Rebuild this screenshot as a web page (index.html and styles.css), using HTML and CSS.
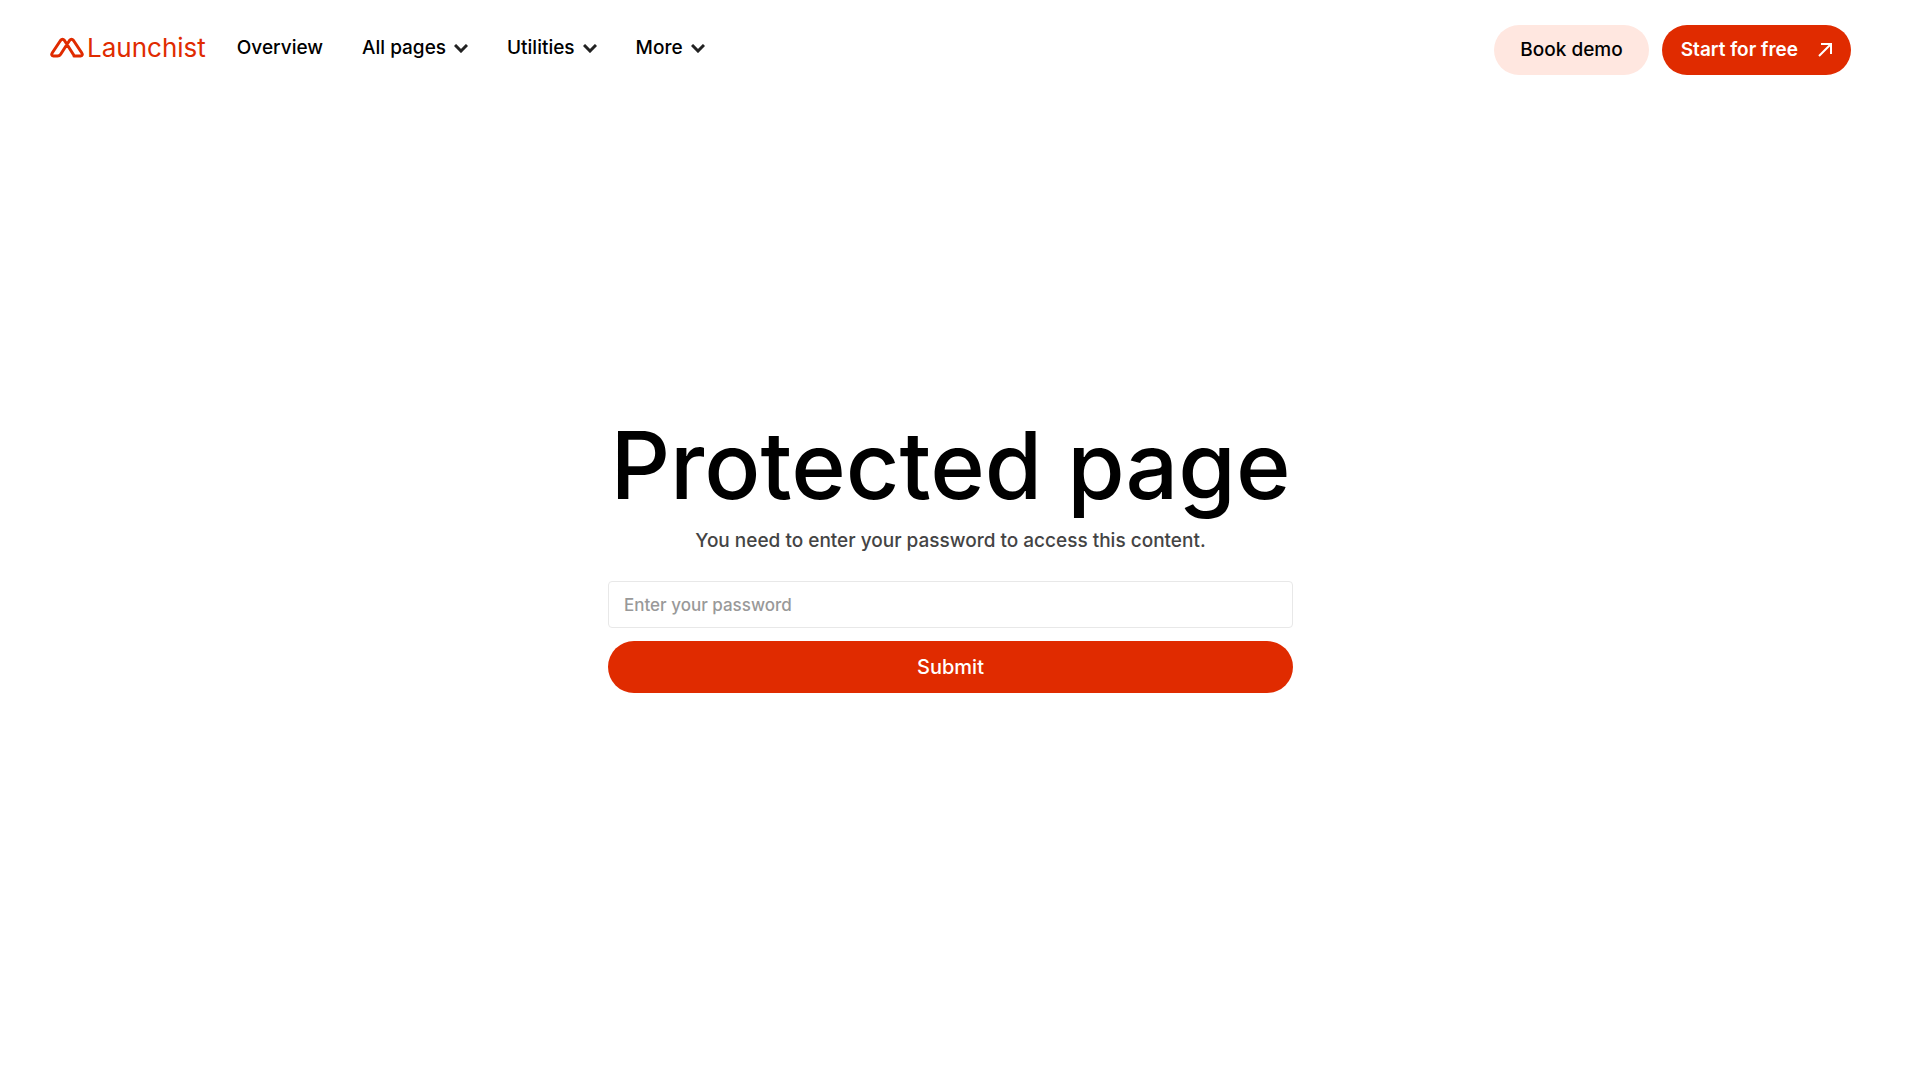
FILE: index.html
```html
<!DOCTYPE html>
<html lang="en">
<head>
<meta charset="utf-8">
<meta name="viewport" content="width=device-width, initial-scale=1">
<title>Protected page – Launchist</title>
<link rel="stylesheet" href="styles.css">
</head>
<body>
<header class="header">
  <a class="brand" href="#">
    <svg class="brand-mark" viewBox="0 0 34 22" aria-hidden="true"><path d="M24 19H30.500Q33.500 18.500 31.500 15.500L23.500 3.500Q21.500 1 19.500 3.500L10.500 17.500Q9.500 19 7.500 19H3.500Q.5 18.500 2.500 15.500L10.500 3.500Q12.500 1 14.500 3.500L24 18.500"/></svg>
    <span>Launchist</span>
  </a>
  <nav class="nav">
    <a class="nav-link" href="#">Overview</a>
    <button class="nav-link" type="button">All pages <svg class="chevron" viewBox="0 0 14 9" aria-hidden="true"><path d="M1 1l6 6 6-6"/></svg></button>
    <button class="nav-link" type="button">Utilities <svg class="chevron" viewBox="0 0 14 9" aria-hidden="true"><path d="M1 1l6 6 6-6"/></svg></button>
    <button class="nav-link" type="button">More <svg class="chevron" viewBox="0 0 14 9" aria-hidden="true"><path d="M1 1l6 6 6-6"/></svg></button>
  </nav>
  <div class="actions">
    <a class="pill pill-soft" href="#">Book demo</a>
    <a class="pill pill-solid" href="#">Start for free <svg class="arrow" viewBox="0 0 14 14" aria-hidden="true"><path d="M1 13L13 1M3 1h10v10"/></svg></a>
  </div>
</header>
<main class="main">
  <form class="gate">
    <h1 class="title">Protected page</h1>
    <label class="lead" for="password">You need to enter your password to access this content.</label>
    <input class="field" id="password" type="password" placeholder="Enter your password">
    <button class="submit" type="submit">Submit</button>
  </form>
</main>
</body>
</html>
```
FILE: styles.css
```css
* { box-sizing: border-box; }

body {
  margin: 0;
  padding-right: 19px;
  min-height: 100vh;
  display: flex;
  flex-direction: column;
  background: #fff;
  color: #000;
  font: 500 19px/24px Inter, "Liberation Sans", sans-serif;
}

a { color: inherit; text-decoration: none; }

button { font: inherit; border: 0; cursor: pointer; }

.header {
  display: flex;
  align-items: flex-start;
  padding: 25px 50px;
}

.brand {
  display: flex;
  align-items: center;
  gap: 3px;
  height: 46px;
  margin-right: 31px;
  color: #e02b00;
  font-size: 26px;
  font-weight: 400;
}

.brand-mark { width: 34px; height: 22px; }

.brand-mark path {
  fill: none;
  stroke: currentColor;
  stroke-width: 3;
  stroke-linecap: round;
  stroke-linejoin: round;
}

.nav { display: flex; gap: 39px; }

.nav-link {
  display: flex;
  align-items: center;
  gap: 8px;
  height: 46px;
  padding: 0;
  background: none;
  color: inherit;
}

.chevron { width: 14px; height: 9px; }

.chevron path {
  fill: none;
  stroke: #222;
  stroke-width: 3;
}

.actions {
  display: flex;
  gap: 13px;
  margin-left: auto;
}

.pill {
  display: flex;
  align-items: center;
  height: 50px;
  padding: 0 26px;
  border-radius: 25px;
}

.pill-soft { background: #ffe7e0; }

.pill-solid {
  gap: 20px;
  padding: 0 19px;
  background: #e02b00;
  color: #fff;
  font-weight: 600;
}

.arrow { width: 14px; height: 14px; }

.arrow path {
  fill: none;
  stroke: currentColor;
  stroke-width: 2;
}

.main {
  flex: 1;
  display: flex;
  justify-content: center;
  align-items: center;
  padding-bottom: 78px;
}

.gate {
  display: flex;
  flex-direction: column;
  width: 100%;
  max-width: 685px;
}

.title {
  align-self: center;
  margin: 0 0 8px;
  font-size: 93px;
  font-weight: 500;
  line-height: 112px;
  white-space: nowrap;
}

.lead {
  margin-bottom: 28px;
  color: #444;
  text-align: center;
}

.field {
  height: 47px;
  margin-bottom: 13px;
  padding: 0 15px;
  border: 1px solid #e8e8e8;
  border-radius: 4px;
  background: #fff;
  font: 500 17px/24px Inter, "Liberation Sans", sans-serif;
}

.field::placeholder { color: #999; opacity: 1; }

.submit {
  height: 52px;
  border-radius: 26px;
  background: #e02b00;
  color: #fff;
  font-size: 20px;
}
```
